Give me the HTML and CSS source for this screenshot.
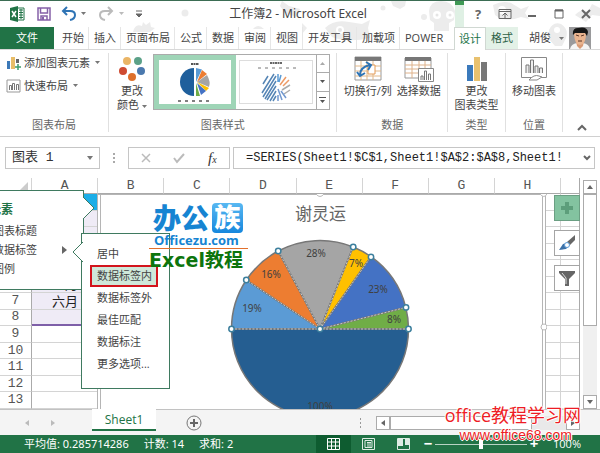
FILE: index.html
```html
<!DOCTYPE html>
<html lang="zh-CN">
<head>
<meta charset="utf-8">
<title>工作簿2 - Microsoft Excel</title>
<link rel="stylesheet" href="styles.css">
</head>
<body>
<header class="top">
  <svg class="doodles" viewBox="0 0 600 49" preserveAspectRatio="xMaxYMin slice" aria-hidden="true">
    <g fill="#ececec">
      <circle cx="185" cy="12" r="3.5"/><circle cx="383" cy="7" r="2.5"/><circle cx="424" cy="16" r="3"/>
      <path d="M133 31q2-9 9-6l1-4 3 3 4-3 1 5 4 1-5 4zM282 0l7 5 11 3-3 8-12-4-5-7zM253 28q5-6 11 0z"/>
      <path d="M429 10q1-10 12-10t14 10l-1 9-5 3v8h-15v-8l-4-3z"/>
      <path d="M325 27q9-9 24-6l13 2 8-4-2 8 2 10q-22 5-38-1zM391 0h15l-1 5-5 3-7-3zM493 4q10-5 18-2l10 6 8-3-4 7 4 6-8-2q-16 6-26-2z"/>
      <path d="M549 29q4-9 12-6 8 5 5 14l-4 8h-7l-6-7zM575 14q7-7 13-3l4-8 8 4v8l-8-1-6 7zM302 22l5 5-5 6z"/>
    </g>
    <g fill="#fff"><circle cx="437" cy="14" r="4"/><circle cx="450" cy="14" r="4"/><circle cx="340" cy="29" r="4"/><circle cx="502" cy="9" r="4"/><circle cx="557" cy="29" r="3"/></g>
    <g fill="#e5e5e5"><circle cx="437" cy="14" r="1.5"/><circle cx="450" cy="14" r="1.5"/><circle cx="340" cy="29" r="2"/></g>
    <path d="M455 4h9v23h-9z" fill="#dff0e4"/><path d="M455 0h9v4h-9z" fill="#3f9a55"/>
  </svg>
  <div class="titlebar">
    <div class="quick">
      <svg width="16" height="16" viewBox="0 0 16 16"><path d="M8 2h7v12H8z" fill="#fff" stroke="#217346"/><path d="M10 4h4M10 6.5h4M10 9h4M10 11.5h4M12 3v10" stroke="#217346"/><path d="M1 2l8-2v16l-8-2z" fill="#217346"/><path d="M3 5l4 6M7 5l-4 6" stroke="#fff" stroke-width="1.5"/></svg>
      <button aria-label="保存"><svg width="14" height="14" viewBox="0 0 14 14"><path d="M1 1h12v12H1zM3.500 1v5h7V1M4 13V9h6v4" fill="none" stroke="#8560a8" stroke-width="1.500"/><path d="M5 10h2v3H5z" fill="#8560a8"/></svg></button>
      <button aria-label="撤消"><svg width="28" height="16" viewBox="0 0 28 16"><path d="M2 5h7q5 0 5 4t-5 5M6 1L2 5l4 4" fill="none" stroke="#2f74b5" stroke-width="2"/><path d="M20 6h5l-2.500 3z" fill="#777"/></svg></button>
      <button aria-label="恢复"><svg width="28" height="16" viewBox="0 0 28 16"><path d="M13 5H6Q1 5 1 9t5 5M9 1l4 4-4 4" fill="none" stroke="#bbb" stroke-width="2"/><path d="M20 6h5l-2.500 3z" fill="#bbb"/></svg></button>
      <button aria-label="自定义快速访问工具栏"><svg width="8" height="8" viewBox="0 0 8 8"><path d="M1 1h6M1 4h6L4 7z" fill="#666" stroke="#666"/></svg></button>
    </div>
    <h1>工作簿2 - Microsoft Excel</h1>
    <div class="window">
      <button class="help">?</button>
      <button aria-label="功能区显示选项"><svg width="14" height="12" viewBox="0 0 14 12"><path d="M1 1.500h12v9H1zM1 3.500h12M7 10V5M4.500 7.500L7 5l2.500 2.500" fill="none" stroke="#666"/></svg></button>
      <button aria-label="最小化"><svg width="14" height="12" viewBox="0 0 14 12"><path d="M3 8h8" stroke="#666" stroke-width="2"/></svg></button>
      <button aria-label="还原"><svg width="14" height="12" viewBox="0 0 14 12"><path d="M3 2h8v8H3z" fill="none" stroke="#666"/><path d="M3 2.500h8" stroke="#666" stroke-width="2"/></svg></button>
      <button aria-label="关闭"><svg width="14" height="12" viewBox="0 0 14 12"><path d="M3 2l8 8M11 2l-8 8" stroke="#666" stroke-width="2"/></svg></button>
    </div>
  </div>
  <nav class="tabs">
    <a class="file" href="#">文件</a><a href="#">开始</a><a href="#">插入</a><a href="#">页面布局</a><a href="#">公式</a><a href="#">数据</a><a href="#">审阅</a><a href="#">视图</a><a href="#">开发工具</a><a href="#">加载项</a><a class="power" href="#">POWER</a><a class="active" href="#">设计</a><a class="format" href="#">格式</a>
    <button class="user">胡俊 <svg width="5" height="3" viewBox="0 0 5 3"><path d="M0 0h5L2.500 3z" fill="#777"/></svg></button>
    <svg class="avatar" width="22" height="22" viewBox="0 0 22 22"><path d="M0 0h22v22H0z" fill="#9a9a9c"/><path d="M1 22q1-5 7-6h6q6 1 7 6z" fill="#f5f5f5"/><path d="M7 14h8l-1 5-3 3-3-3z" fill="#d99b76"/><path d="M5 6h12q0 8-3 11l-3 1-3-1Q5 13 5 6z" fill="#e9b48f"/><path d="M4 8Q3 1 9 1q9-2 10 4l-1 4-2-3H6z" fill="#161616"/><path d="M7 8l3 1M15 8l-3 1M9 14h4" stroke="#5b3526"/></svg>
  </nav>
</header>

<section class="ribbon">
  <div class="group g-layout">
    <div class="stack">
      <button><svg width="15" height="14" viewBox="0 0 15 14"><path d="M1 5h3v8H1z" fill="#3c79b8"/><path d="M5 1h4v12H5z" fill="#e8bd68"/><path d="M10 3h3v4h-3z" fill="#666"/><path d="M12 8v6M9 11h6" stroke="#3f9a6b" stroke-width="1.500"/></svg>添加图表元素<svg width="5" height="3" viewBox="0 0 5 3"><path d="M0 0h5L2.500 3z" fill="#777"/></svg></button>
      <button><svg width="15" height="14" viewBox="0 0 15 14"><path d="M1 1h13v12H1z" fill="#fff" stroke="#999"/><path d="M3.500 11V6.500h2V11M6.500 11V4.500h2V11M10.500 11V5.500h2V11" fill="none" stroke="#777"/></svg>快速布局<svg width="5" height="3" viewBox="0 0 5 3"><path d="M0 0h5L2.500 3z" fill="#777"/></svg></button>
    </div>
    <p>图表布局</p>
  </div>
  <div class="group g-style">
    <div class="row">
      <button class="big"><svg width="28" height="26" viewBox="0 0 28 26"><circle cx="9" cy="5" r="4" fill="#eab566"/><circle cx="20" cy="5" r="4" fill="#5ba188"/><circle cx="5" cy="15" r="4" fill="#cf4b31"/><circle cx="23" cy="15" r="4" fill="#4b79ae"/><circle cx="14" cy="21" r="4" fill="#dd702c"/></svg><span>更改<br>颜色 <svg width="5" height="3" viewBox="0 0 5 3"><path d="M0 0h5L2.500 3z" fill="#777"/></svg></span></button>
      <div class="gallery">
        <button class="thumb chosen" aria-label="样式 1"><svg width="70" height="44" viewBox="0 0 70 44"><path d="M31 4h8" stroke="#555" stroke-width="2" stroke-dasharray="2 .5"/><path d="M34 8a14 14 0 0 0 0 28z" fill="#1f5f9c"/><path d="M36 22V8l6 1.500z" fill="#5b9bd5"/><path d="M37 22l5-12 5 4z" fill="#ed7d31"/><path d="M37 22l10-7q4 7 2 12z" fill="#a5a5a5"/><path d="M37 22l12 6-3 3z" fill="#ffc000"/><path d="M37 23l9 8-5 4z" fill="#4472c4"/><path d="M36 23l4 13-4 0z" fill="#70ad47"/><path d="M18 41h35" stroke="#555" stroke-width="1.500" stroke-dasharray="3 4"/></svg></button>
        <button class="thumb" aria-label="样式 2"><svg width="74" height="44" viewBox="0 0 74 44"><path d="M31 3h12" stroke="#666" stroke-width="2" stroke-dasharray="2 .5"/><path d="M19 8h38" stroke="#777" stroke-dasharray="3 4"/><g stroke-width="1.500"><path d="M29 16l-5 8M35 14L23 33M37 16L24 37M37 21L26 39M37 26l-9 14M37 31l-6 10M37 36l-3 5" stroke="#5585b5"/><path d="M39 14v8M42 15l-2 7" stroke="#5b9bd5"/><path d="M47 17l-6 8M50 20l-6 6" stroke="#ed9a65"/><path d="M51 25l-8 5M51 30l-6 4" stroke="#aaa"/><path d="M39 29l4 11M42 31l5 7M39 35v6" stroke="#7198cf"/></g></svg></button>
        <div class="spin">
          <button aria-label="上一行"><svg width="5" height="3" viewBox="0 0 5 3"><path d="M0 3h5L2.500 0z" fill="#aaa"/></svg></button>
          <button aria-label="下一行"><svg width="5" height="3" viewBox="0 0 5 3"><path d="M0 0h5L2.500 3z" fill="#555"/></svg></button>
          <button aria-label="更多"><svg width="7" height="6" viewBox="0 0 7 6"><path d="M0 0h7v1H0zM1 3h5L3.500 6z" fill="#555"/></svg></button>
        </div>
      </div>
    </div>
    <p>图表样式</p>
  </div>
  <div class="group g-data">
    <div class="row">
      <button class="big"><svg width="28" height="26" viewBox="0 0 28 26"><path d="M1 1h26v23H1z" fill="#fff" stroke="#999"/><path d="M1 1h26v4H1z" fill="#777"/><path d="M1 10h26M1 15h26M1 20h26M7 5v19M13 5v19M19 5v19" stroke="#e2b889"/><path d="M14 9h7v9h-7z" fill="#fff" stroke="#e39a54"/><path d="M6 19q0-8 10-10M12 6l5 3-3 5M3 16l3 4 5-3" fill="none" stroke="#2e74b5" stroke-width="2"/></svg><span>切换行/列</span></button>
      <button class="big"><svg width="30" height="26" viewBox="0 0 30 26"><path d="M1 2h26v20H1z" fill="#fff" stroke="#999"/><path d="M1 1h26v4H1z" fill="#777"/><path d="M1 9h26M1 13h26M1 17h26M8 5v17M15 5v17M21 5v17" stroke="#deb28b"/><path d="M14.500 12.500h15v13h-15z" fill="#fff" stroke="#888"/><path d="M17 24v-4h2v4M20.500 24v-9h2v9M24.500 24v-6h2v6" fill="none" stroke="#777"/></svg><span>选择数据</span></button>
    </div>
    <p>数据</p>
  </div>
  <div class="group g-type">
    <div class="row"><button class="big"><svg width="22" height="26" viewBox="0 0 22 26"><path d="M1 9h6v16H1z" fill="#3b7abc"/><path d="M8 1h6v24H8z" fill="#e8c16f"/><path d="M15 6h6v19h-6z" fill="#777"/></svg><span>更改<br>图表类型</span></button></div>
    <p>类型</p>
  </div>
  <div class="group g-place">
    <div class="row"><button class="big"><svg width="28" height="26" viewBox="0 0 28 26"><path d="M1.500 1.500h25v20h-25z" fill="#fff" stroke="#888"/><path d="M6 17v-8h3v8M10.500 17V4h3v13M15 17v-7h3v7M19.500 17v-5h3v5" fill="#eee" stroke="#777"/><path d="M9 24q5-6 10-4l3 1-5 3z" fill="#fff" stroke="#888"/></svg><span>移动图表</span></button></div>
    <p>位置</p>
  </div>
  <button class="collapse" aria-label="折叠功能区"><svg width="10" height="7" viewBox="0 0 10 7"><path d="M1 6l4-4 4 4" fill="none" stroke="#666" stroke-width="2"/></svg></button>
</section>

<section class="formula">
  <div class="namebox"><select aria-label="名称框"><option>图表 1</option></select><svg width="6" height="4" viewBox="0 0 6 4"><path d="M0 0h6L3 4z" fill="#777"/></svg></div>
  <svg width="4" height="12" viewBox="0 0 4 12"><path d="M1 1h2v2H1zM1 5h2v2H1zM1 9h2v2H1z" fill="#aaa"/></svg>
  <div class="actions">
    <button aria-label="取消"><svg width="12" height="12" viewBox="0 0 12 12"><path d="M2 2l8 8M10 2l-8 8" stroke="#bbb" stroke-width="1.500"/></svg></button>
    <button aria-label="输入"><svg width="12" height="12" viewBox="0 0 12 12"><path d="M1 6l3 4 7-8" fill="none" stroke="#bbb" stroke-width="2"/></svg></button>
    <button class="fx" aria-label="插入函数"><i>f</i><small>x</small></button>
  </div>
  <div class="fbox"><input aria-label="编辑栏" value="=SERIES(Sheet1!$C$1,Sheet1!$A$2:$A$8,Sheet1!"><svg width="8" height="6" viewBox="0 0 8 6"><path d="M1 1l3 3 3-3" fill="none" stroke="#666" stroke-width="2"/></svg></div>
</section>

<main class="sheet">
  <div class="grid">
    <table>
      <colgroup><col class="c-num"><col><col><col><col><col><col><col><col><col class="c-last"></colgroup>
      <thead><tr><th class="corner"><svg width="8" height="8" viewBox="0 0 8 8"><path d="M8 0v8H0z" fill="#ccc"/></svg></th><th>A</th><th>B</th><th>C</th><th>D</th><th>E</th><th>F</th><th>G</th><th>H</th><th></th></tr></thead>
      <tbody>
        <tr><th>1</th><td class="key"></td><td></td><td></td><td></td><td></td><td></td><td></td><td></td><td></td></tr>
        <tr class="pick"><th>2</th><td></td><td></td><td></td><td></td><td></td><td></td><td></td><td></td><td></td></tr>
        <tr class="pick"><th>3</th><td></td><td></td><td></td><td></td><td></td><td></td><td></td><td></td><td></td></tr>
        <tr class="pick"><th>4</th><td></td><td></td><td></td><td></td><td></td><td></td><td></td><td></td><td></td></tr>
        <tr class="pick"><th>5</th><td></td><td></td><td></td><td></td><td></td><td></td><td></td><td></td><td></td></tr>
        <tr class="pick"><th>6</th><td>五月</td><td></td><td></td><td></td><td></td><td></td><td></td><td></td><td></td></tr>
        <tr class="pick"><th>7</th><td>六月</td><td></td><td></td><td></td><td></td><td></td><td></td><td></td><td></td></tr>
        <tr class="pick end"><th>8</th><td></td><td></td><td></td><td></td><td></td><td></td><td></td><td></td><td></td></tr>
        <tr><th>9</th><td></td><td></td><td></td><td></td><td></td><td></td><td></td><td></td><td></td></tr>
        <tr><th>10</th><td></td><td></td><td></td><td></td><td></td><td></td><td></td><td></td><td></td></tr>
        <tr><th>11</th><td></td><td></td><td></td><td></td><td></td><td></td><td></td><td></td><td></td></tr>
        <tr><th>12</th><td></td><td></td><td></td><td></td><td></td><td></td><td></td><td></td><td></td></tr>
        <tr><th>13</th><td></td><td></td><td></td><td></td><td></td><td></td><td></td><td></td><td></td></tr>
      </tbody>
    </table>

    <svg class="chart" width="450" height="216" viewBox="97 193 450 216">
      <path d="M97 193h448v216H97z" fill="#fff"/>
      <path d="M97.500 193v216M100.500 193v216M542.500 193v216M545.500 193v216M97 193.500h448" stroke="#b5b5b5" fill="none"/>
      <circle cx="544" cy="326" r="3" fill="#fff" stroke="#bbb"/><path d="M316 193q4 5 8 0M540 193q4 5 7 0" fill="#fff" stroke="#bbb"/>
      <text x="320.500" y="219" class="ctitle">谢灵运</text>
      <g stroke="#777" stroke-width="1.500">
        <path d="M320 328h-88.500A88.500 88.500 0 0 1 246.300 279z" fill="#5b9bd5"/>
        <path d="M320 328L246.300 279A88.500 88.500 0 0 1 278.200 250z" fill="#ed7d31"/>
        <path d="M320 328L278.200 250A88.500 88.500 0 0 1 353.200 246z" fill="#a5a5a5"/>
        <path d="M320 328L353.200 246A88.500 88.500 0 0 1 371 255.700z" fill="#ffc000"/>
        <path d="M320 328L371 255.700A88.500 88.500 0 0 1 405.800 306.400z" fill="#4472c4"/>
        <path d="M320 328l85.800-21.600A88.500 88.500 0 0 1 408.500 328z" fill="#70ad47"/>
        <path d="M231.500 328h177a88.500 88.500 0 0 1-177 0z" fill="#255e91"/>
      </g>
      <path d="M320 328L246.300 279M320 328l-41.800-78M320 328l33.200-82M320 328l51-72.300M320 328l85.800-21.600M231.500 328h177" stroke="#c5c5c5" stroke-dasharray="2 1.500"/>
      <g class="pct"><text x="252" y="311">19%</text><text x="271" y="277">16%</text><text x="316" y="256">28%</text><text x="356" y="266">7%</text><text x="378" y="292">23%</text><text x="394" y="322">8%</text><text x="320" y="409">100%</text></g>
      <g fill="#fff" stroke="#3c7f9d" stroke-width="1.500"><circle cx="231.500" cy="328" r="2.700"/><circle cx="246.300" cy="279" r="2.700"/><circle cx="278.200" cy="250" r="2.700"/><circle cx="353.200" cy="246" r="2.700"/><circle cx="371" cy="256" r="2.700"/><circle cx="406" cy="306.400" r="2.700"/><circle cx="408.500" cy="328" r="2.700"/><circle cx="320" cy="328" r="2.700"/></g>
    </svg>

    <div class="tools">
      <button class="plus" aria-label="图表元素"><svg width="14" height="14" viewBox="0 0 14 14"><path d="M7 1v12M1 7h12" stroke="#5d9e7b" stroke-width="4"/></svg></button>
      <button aria-label="图表样式"><svg width="18" height="18" viewBox="0 0 18 18"><path d="M17 1v5l-5 5-3-3z" fill="#666"/><path d="M1 16l4-6 4-1 2 3-3 3z" fill="#3c71a8"/><circle cx="9" cy="11" r="2.500" fill="#fff" stroke="#5d9bd5"/></svg></button>
      <button aria-label="图表筛选器"><svg width="18" height="18" viewBox="0 0 18 18"><path d="M1 2h16v2l-6 6v7H7v-7L1 4z" fill="#666"/><path d="M4 4l4 5v6" stroke="#ddd" fill="none"/></svg></button>
    </div>

    <div class="popup">
      <h2>图表元素</h2>
      <ul><li>图表标题</li><li>数据标签<svg width="5" height="8" viewBox="0 0 5 8"><path d="M0 0l5 4-5 4z" fill="#666"/></svg></li><li>图例</li></ul>
      <svg class="tip" width="12" height="22" viewBox="0 0 12 22"><path d="M0 0l11 11L0 22" fill="#fff" stroke="#3f7a60"/></svg>
    </div>

    <div class="brand">
      <div class="brand-name">办公<b>族</b></div>
      <div class="brand-url">Officezu.com</div>
      <div class="brand-sub">Excel教程</div>
    </div>

    <div class="submenu">
      <svg class="tip" width="11" height="20" viewBox="0 0 11 20"><path d="M11 0L1 10l10 10" fill="#fff" stroke="#3f7a60"/></svg>
      <button>居中</button><button class="hot">数据标签内</button><button>数据标签外</button><button>最佳匹配</button><button>数据标注</button><button>更多选项...</button>
    </div>
  </div>
  <div class="vscroll"><button aria-label="向上"><svg width="6" height="4" viewBox="0 0 6 4"><path d="M0 4h6L3 0z" fill="#666"/></svg></button><div class="vthumb"></div><button aria-label="向下"><svg width="6" height="4" viewBox="0 0 6 4"><path d="M0 0h6L3 4z" fill="#666"/></svg></button></div>
</main>

<footer class="bottom">
  <div class="sheetbar">
    <div class="navs"><svg width="4" height="6" viewBox="0 0 4 6"><path d="M4 0v6L0 3z" fill="#bbb"/></svg><svg width="4" height="6" viewBox="0 0 4 6"><path d="M0 0v6l4-3z" fill="#bbb"/></svg></div>
    <a class="sheet-tab" href="#">Sheet1</a>
    <button class="add" aria-label="新工作表"><svg width="16" height="16" viewBox="0 0 16 16"><circle cx="8" cy="8" r="7" fill="none" stroke="#777"/><path d="M8 4v8M4 8h8" stroke="#666" stroke-width="2"/></svg></button>
    <svg width="4" height="12" viewBox="0 0 4 12"><path d="M1 1h1v2H1zM1 5h1v2H1zM1 9h1v2H1z" fill="#999"/></svg>
    <div class="hscroll"><button aria-label="向左"><svg width="4" height="6" viewBox="0 0 4 6"><path d="M4 0v6L0 3z" fill="#666"/></svg></button><div class="hthumb"></div><button aria-label="向右"><svg width="4" height="6" viewBox="0 0 4 6"><path d="M0 0v6l4-3z" fill="#666"/></svg></button></div>
  </div>
  <div class="status">
    <div class="sums"><span>平均值: 0.285714286</span><span>计数: 14</span><span>求和: 2</span></div>
    <div class="views">
      <button class="on" aria-label="普通"><svg width="13" height="12" viewBox="0 0 13 12"><path d="M.5.5h12v11H.5zM.5 4h12M.5 8h12M4.500 0v12M8.500 0v12" fill="none" stroke="#fff"/></svg></button>
      <button aria-label="页面布局"><svg width="13" height="12" viewBox="0 0 13 12"><path d="M.5.5h12v11H.5zM3 2.500h7v7H3zM5 4.500h4M5 6h4M5 8h4" fill="none" stroke="#dfece4"/></svg></button>
      <button aria-label="分页预览"><svg width="13" height="12" viewBox="0 0 13 12"><path d="M.5.5h12v11H.5z" fill="none" stroke="#dfece4"/><path d="M1 1h5v7H1zM8 1h4v6H8z" fill="#dfece4"/></svg></button>
    </div>
    <span class="sign">−</span><input type="range" aria-label="显示比例" min="0" max="100" value="50"><span class="sign">+</span><span class="zoom">100%</span>
  </div>
  <div class="credit"><div>office教程学习网</div><div class="credit-url">www.office68.com</div></div>
</footer>
</body>
</html>
```

FILE: styles.css
```css
* { box-sizing: border-box; }
body {
  margin: 0;
  height: 100vh;
  display: flex;
  flex-direction: column;
  overflow: hidden;
  background: #fff;
  color: #444;
  font: 11px/14px "Open Sans", "Noto Sans CJK SC", sans-serif;
}
button, input, select { font: inherit; color: inherit; border: 0; padding: 0; margin: 0; background: none; border-radius: 0; outline: 0; }
button { display: flex; align-items: center; justify-content: center; white-space: nowrap; }
a { color: inherit; text-decoration: none; }
svg { flex: none; display: block; }
h1, h2, p, ul { margin: 0; padding: 0; font-weight: normal; }

.top { position: relative; border-top: 1px solid #3b6d54; }
.doodles { position: absolute; top: 0; left: 0; width: 100%; height: 48px; }
.titlebar { position: relative; height: 26px; display: grid; grid-template-columns: 1fr auto 1fr; align-items: center; }
.quick { display: flex; align-items: center; gap: 10px; padding-left: 9px; }
.quick button:last-child { margin-left: -2px; }
.quick button:nth-child(2) { margin-left: 2px; }
.titlebar h1 { font: 12px/16px "Noto Sans", "Noto Sans CJK SC", sans-serif; padding-right: 4px; }
.window { display: flex; justify-content: flex-end; gap: 13px; padding-right: 7px; }
.help { width: 14px; font-weight: bold; font-size: 13px; color: #666; }

.tabs { position: relative; height: 23px; display: flex; align-items: stretch; border-bottom: 1px solid #d8d8d8; }
.tabs a { padding: 0 4px 0 5px; line-height: 22px; border-right: 1px solid #e6e6e6; white-space: nowrap; }
.tabs .file { width: 54px; padding: 0; margin-right: 3px; text-align: center; color: #fff; background: #217346; border: 0; }
.tabs .power { border: 0; margin-right: auto; }
.tabs .active { margin-bottom: -1px; padding: 0 4px; color: #217346; background: #fff; border: 1px solid #d0d8d2; border-bottom: 0; line-height: 21px; }
.tabs .format { padding: 0 5px; background: #e3f1e7; border: 0; color: #2d6146; }
.user { gap: 8px; margin: 0 5px 0 11px; }
.avatar { margin-right: 9px; }

.ribbon { display: flex; height: 87px; border-bottom: 1px solid #d0d0d0; }
.group { min-width: 0; display: flex; flex-direction: column; justify-content: space-between; margin: 3px 0 4px; padding-top: 1px; border-right: 1px solid #e0e0e0; }
.group p { text-align: center; color: #666; line-height: 14px; }
.g-layout { flex: 109 1 0; }
.g-style { flex: 229 1 0; }
.g-data { flex: 111 1 0; }
.g-type, .g-place { flex: 57 1 0; }
.stack { display: flex; flex-direction: column; align-items: flex-start; gap: 7px; padding-left: 6px; }
.stack button { gap: 3px; height: 15px; margin-top: 1px; }
.stack button svg:last-child { margin-left: 2px; }
.row { display: flex; justify-content: center; gap: 5px; }
.big { flex-direction: column; justify-content: flex-start; gap: 2px; padding-top: 2px; line-height: 14px; }
.big span svg { display: inline-block; vertical-align: middle; }
.g-style .row { justify-content: flex-start; gap: 6px; padding-left: 8px; }
.gallery { flex: 1; display: flex; height: 56px; margin-right: 7px; border: 1px solid #ababab; }
.thumb { flex: 1; border: 1px solid #ddd; margin: 5px 3px; overflow: hidden; }
.thumb.chosen { border: 5px solid #9fd5b7; margin: 0; }
.spin { width: 13px; display: flex; flex-direction: column; border-left: 1px solid #ababab; }
.spin button { flex: 1; }
.spin button + button { border-top: 1px solid #ababab; }
.collapse { flex: 37 1 0; align-items: flex-end; padding-bottom: 5px; }

.formula { display: flex; align-items: center; height: 41px; padding: 0 5px; color: #333; }
.namebox { width: 95px; height: 22px; margin-right: 12px; padding: 0 6px; display: flex; align-items: center; border: 1px solid #c6c6c6; }
.namebox select { flex: 1; appearance: none; font: 13px/20px "Liberation Mono", "Noto Sans CJK SC", monospace; }
.actions { display: flex; width: 102px; height: 22px; margin: 0 3px 0 12px; border: 1px solid #c6c6c6; }
.actions button { flex: 1; }
.fx { font: 15px/18px "Liberation Serif", serif; }
.fx small { font-size: 10px; padding-top: 4px; font-style: italic; }
.fbox { flex: 1; height: 22px; display: flex; align-items: center; padding: 0 3px 0 12px; border: 1px solid #c6c6c6; }
.fbox input { flex: 1; min-width: 0; color: #222; font: 12px/20px "Liberation Mono", monospace; }

.sheet { flex: 1; min-height: 0; display: flex; gap: 3px; padding-right: 3px; }
.grid { position: relative; flex: 1; min-width: 0; overflow: hidden; }
table { width: 100%; height: 100%; table-layout: fixed; border-collapse: separate; border-spacing: 0; border-right: 1px solid #aaa; }
.c-num { width: 32px; }
.c-last { width: 18px; }
th, td { padding: 0; border-right: 1px solid #d4d4d4; border-bottom: 1px solid #d4d4d4; line-height: 12px; font-size: 13px; }
tr > :last-child { border-right: 0; }
th { font: 13px/12px "Liberation Mono", monospace; color: #555; }
thead th { height: 16px; border-bottom-color: #aaa; }
tbody th { border-right-color: #aaa; }
td { text-align: right; padding-right: 19px; color: #222; }
td:nth-child(2) { white-space: nowrap; }
td:last-child { padding: 0; }
.corner svg { margin-left: 20px; }
.key { background: #1caee8; }
.pick td:nth-child(2) { background: #efebf6; }
.pick.end td:nth-child(2) { border-bottom: 2px solid #7e5fa8; }

.chart { position: absolute; left: 97px; top: 16px; }
.ctitle { font: 17px "Noto Sans CJK SC", sans-serif; fill: #666; text-anchor: middle; }
.pct { font: 10px "Noto Sans", sans-serif; fill: #404040; text-anchor: middle; }
.tools { position: absolute; top: 17px; right: 0; display: flex; flex-direction: column; gap: 9px; }
.tools button { width: 26px; height: 26px; background: #fff; border: 1px solid #a5a5a5; }
.tools .plus { background: #83c3a0; border-color: #6b9f83; }

.popup { position: absolute; left: -40px; top: 12px; width: 124px; height: 100px; padding: 11px 0 0; background: #fff; border: 1px solid #3f7a60; }
.popup h2 { padding-left: 4px; font-size: 12px; line-height: 16px; font-weight: bold; color: #217346; }
.popup ul { list-style: none; padding: 3px 0 0 32px; }
.popup li { display: flex; align-items: center; justify-content: space-between; line-height: 19px; padding-right: 16px; }
.popup .tip { position: absolute; left: 122px; top: 6px; }
.submenu { position: absolute; left: 81px; top: 55px; width: 89px; padding: 9px 0 13px; background: #fff; border: 1px solid #3f7a60; }
.submenu button { height: 22px; padding-left: 15px; width: 100%; justify-content: flex-start; }
.submenu .hot { width: 68px; margin-left: 8px; padding-left: 5px; background: #cfe8da; border: 2px solid #d3141c; }
.submenu .tip { position: absolute; left: -10px; top: 8px; }

.brand { position: absolute; z-index: 1; left: 149px; top: 25px; width: 99px; font-weight: bold; white-space: nowrap; }
.brand-name { display: flex; align-items: center; gap: 3px; padding-left: 4px; font-size: 28px; line-height: 30px; font-weight: 900; color: #1684d2; }
.brand-name b { width: 31px; height: 30px; border-radius: 4px; color: #fff; background: linear-gradient(#58b8f2, #1687dd); font-size: 26px; line-height: 28px; text-align: center; }
.brand-url { padding-left: 5px; font-size: 13px; line-height: 15px; color: #1684d2; border-bottom: 1px solid #e2702c; }
.brand-sub { font: bold 19px/23px "DejaVu Sans", "Noto Sans CJK SC", sans-serif; color: #0d750d; }

.vscroll { width: 14px; display: flex; flex-direction: column; padding-top: 2px; background: linear-gradient(#fff 50%, #f0f0f0 50%); }
.vscroll button { height: 14px; border: 1px solid #ababab; background: #fff; }
.vthumb { height: 132px; margin-bottom: auto; border: 1px solid #ababab; background: #fff; }

.bottom { position: relative; }
.sheetbar { display: flex; height: 26px; align-items: center; background: #f4f4f4; border-top: 1px solid #c2c2c2; }
.navs { display: flex; gap: 22px; width: 92px; padding-left: 25px; }
.sheet-tab { align-self: flex-start; width: 64px; height: 22px; margin-top: -1px; background: #fff; border-bottom: 2px solid #217346; color: #217346; font-size: 12px; line-height: 22px; text-align: center; }
.add { margin: 0 auto 0 30px; }
.hscroll { display: flex; width: 204px; height: 14px; margin: 0 20px 0 13px; background: #e9e9e9; }
.hscroll button { width: 14px; border: 1px solid #ababab; background: #fff; }
.hthumb { width: 142px; margin-right: auto; background: #fff; border: 1px solid #ababab; }
.status { display: flex; align-items: stretch; height: 18px; padding-right: 19px; background: #217346; color: #fff; line-height: 18px; }
.sums { display: flex; gap: 15px; padding-left: 24px; margin-right: auto; font-family: "Noto Sans", "Noto Sans CJK SC", sans-serif; }
.views { display: flex; }
.views button { width: 35px; }
.views .on { background: #0e5c30; }
.sign { width: 14px; text-align: center; font-size: 15px; font-weight: bold; line-height: 17px; }
input[type="range"] { appearance: none; width: 92px; background: linear-gradient(#b9d3c4, #b9d3c4) center / 100% 1px no-repeat; }
input[type="range"]::-webkit-slider-thumb { appearance: none; width: 4px; height: 10px; background: #fff; }
.zoom { padding-left: 12px; }
.credit { position: absolute; right: 19px; top: -5px; color: #ee1c25; font-size: 18px; line-height: 22px; text-align: right; white-space: nowrap; text-shadow: 1px 0 #fff, -1px 0 #fff, 0 1px #fff, 0 -1px #fff; }
.credit-url { padding-right: 9px; font: 14px/18px "Liberation Sans", sans-serif; }
```
